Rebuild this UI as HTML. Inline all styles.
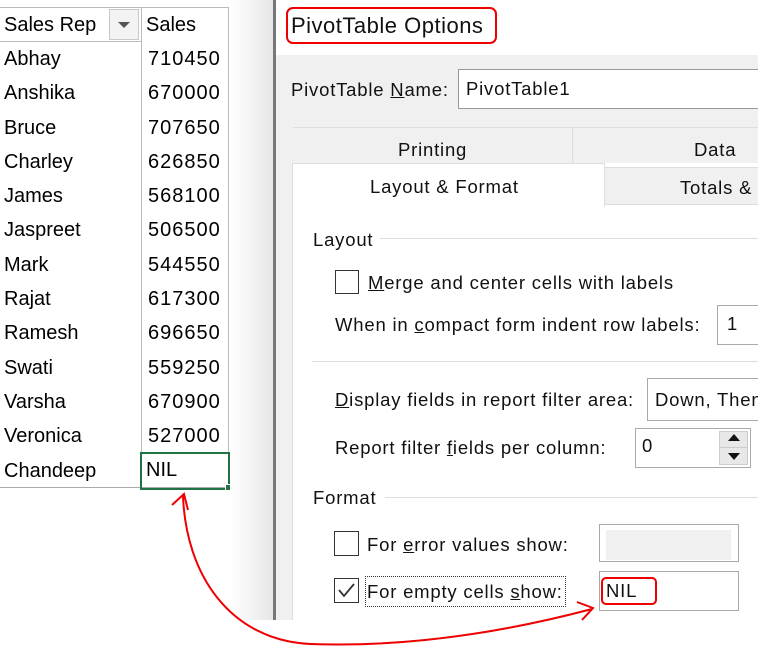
<!DOCTYPE html>
<html><head><meta charset="utf-8"><style>
*{margin:0;padding:0;box-sizing:border-box}
body{width:758px;height:646px;overflow:hidden;background:#fff;position:relative;font-family:"Liberation Sans",sans-serif;color:#000}
.a{position:absolute;white-space:nowrap}
.c{font-size:20px;line-height:34px}
.d{font-size:18.5px;line-height:20px;color:#111;letter-spacing:0.8px}
u{text-decoration:underline}
</style></head><body>
<!-- spreadsheet -->
<div class="a" style="left:0;top:7px;width:229px;height:481px;border-top:1px solid #bbb;border-bottom:1px solid #aaa"></div>
<div class="a" style="left:0;top:41px;width:141px;height:1px;background:#bbb"></div>
<div class="a" style="left:141px;top:7px;width:1px;height:481px;background:#bbb"></div>
<div class="a" style="left:228px;top:7px;width:1px;height:447px;background:#bbb"></div>
<div class="a" style="left:109px;top:9px;width:30px;height:31px;border:1px solid #c8c8c8;background:#f3f3f3"></div>
<div class="a" style="left:118px;top:22px;width:0;height:0;border-left:6px solid transparent;border-right:6px solid transparent;border-top:6px solid #555"></div>
<div class="a c" style="left:4px;top:8px">Sales Rep</div>
<div class="a c" style="left:146px;top:8px">Sales</div>
<div class="a c" style="left:4px;top:42px;line-height:34.3px">Abhay<br>Anshika<br>Bruce<br>Charley<br>James<br>Jaspreet<br>Mark<br>Rajat<br>Ramesh<br>Swati<br>Varsha<br>Veronica<br>Chandeep</div>
<div class="a c" style="left:148px;top:42px;line-height:34.3px;letter-spacing:1px">710450<br>670000<br>707650<br>626850<br>568100<br>506500<br>544550<br>617300<br>696650<br>559250<br>670900<br>527000</div>
<div class="a" style="left:140px;top:452px;width:90px;height:38px;border:2px solid #217346"></div>
<div class="a" style="left:225px;top:484px;width:7px;height:7px;background:#217346;border:1px solid #fff"></div>
<div class="a c" style="left:146px;top:453px">NIL</div>
<!-- dialog -->
<div class="a" style="left:230px;top:0;width:44px;height:620px;background:linear-gradient(to right,#fff,#e6e6e6)"></div>
<div class="a" style="left:273px;top:0;width:3px;height:620px;background:#777"></div>
<div class="a" style="left:276px;top:0;width:482px;height:55px;background:#fff"></div>
<div class="a" style="left:276px;top:55px;width:482px;height:565px;background:#f0f0f0"></div>
<div class="a" style="left:286px;top:7px;width:211px;height:37px;border:2px solid #e00;border-radius:7px"></div>
<div class="a" style="left:291px;top:13px;font-size:22px;line-height:26px;color:#111;letter-spacing:0.5px">PivotTable Options</div>
<div class="a d" style="left:291px;top:80px">PivotTable <u>N</u>ame:</div>
<div class="a" style="left:458px;top:69px;width:310px;height:40px;background:#fff;border:1px solid #999"></div>
<div class="a d" style="left:466px;top:79px">PivotTable1</div>
<div class="a" style="left:293px;top:127px;width:465px;height:1px;background:#ddd"></div>
<div class="a" style="left:572px;top:128px;width:1px;height:36px;background:#ddd"></div>
<div class="a d" style="left:398px;top:140px">Printing</div>
<div class="a d" style="left:694px;top:140px">Data</div>
<div class="a" style="left:292px;top:163px;width:470px;height:457px;background:#fff;border-left:1px solid #ddd"></div>
<div class="a" style="left:604px;top:167px;width:160px;height:38px;background:#f0f0f0;border:1px solid #ddd"></div>
<div class="a d" style="left:680px;top:178px">Totals &amp;</div>
<div class="a" style="left:292px;top:163px;width:313px;height:44px;background:#fff;border:1px solid #ddd;border-bottom:none"></div>
<div class="a d" style="left:370px;top:177px">Layout &amp; Format</div>
<div class="a d" style="left:313px;top:230px">Layout</div>
<div class="a" style="left:380px;top:238px;width:378px;height:1px;background:#ddd"></div>
<div class="a" style="left:335px;top:270px;width:24px;height:24px;border:1px solid #333;background:#fff"></div>
<div class="a d" style="left:368px;top:273px"><u>M</u>erge and center cells with labels</div>
<div class="a d" style="left:335px;top:315px">When in <u>c</u>ompact form indent row labels:</div>
<div class="a" style="left:717px;top:305px;width:50px;height:40px;border:1px solid #aaa;background:#fff"></div>
<div class="a d" style="left:727px;top:314px">1</div>
<div class="a" style="left:312px;top:361px;width:446px;height:1px;background:#ddd"></div>
<div class="a d" style="left:335px;top:390px"><u>D</u>isplay fields in report filter area:</div>
<div class="a" style="left:647px;top:378px;width:120px;height:43px;border:1px solid #aaa;background:#fff;overflow:hidden"></div>
<div class="a d" style="left:655px;top:390px;width:103px;overflow:hidden">Down, Then</div>
<div class="a d" style="left:335px;top:438px">Report filter <u>f</u>ields per column:</div>
<div class="a" style="left:635px;top:428px;width:116px;height:40px;border:1px solid #aaa;background:#fff"></div>
<div class="a d" style="left:642px;top:436px">0</div>
<div class="a" style="left:719px;top:431px;width:29px;height:34px;background:#e8e8e8;border:1px solid #ccc"></div>
<div class="a" style="left:720px;top:447px;width:27px;height:1px;background:#ccc"></div>
<div class="a" style="left:728px;top:434px;border-left:6px solid transparent;border-right:6px solid transparent;border-bottom:7px solid #111"></div>
<div class="a" style="left:728px;top:453px;border-left:6px solid transparent;border-right:6px solid transparent;border-top:7px solid #111"></div>
<div class="a d" style="left:313px;top:488px">Format</div>
<div class="a" style="left:385px;top:497px;width:373px;height:1px;background:#ddd"></div>
<div class="a" style="left:334px;top:531px;width:25px;height:25px;border:1px solid #333;background:#fff"></div>
<div class="a d" style="left:367px;top:535px">For <u>e</u>rror values show:</div>
<div class="a" style="left:599px;top:524px;width:140px;height:38px;border:1px solid #aaa;background:#fff"></div>
<div class="a" style="left:606px;top:530px;width:125px;height:30px;background:#f0f0f0"></div>
<div class="a" style="left:334px;top:578px;width:25px;height:25px;border:1px solid #333;background:#fff"></div>
<svg class="a" style="left:334px;top:578px" width="25" height="25"><path d="M5 12 L10 18 L20 6" fill="none" stroke="#333" stroke-width="1.8"/></svg>
<div class="a" style="left:365px;top:576px;width:201px;height:31px;border:1px dotted #333"></div>
<div class="a d" style="left:367px;top:582px">For empty cells <u>s</u>how:</div>
<div class="a" style="left:599px;top:571px;width:140px;height:40px;border:1px solid #aaa;background:#fff"></div>
<div class="a" style="left:601px;top:577px;width:56px;height:28px;border:2px solid #e00;border-radius:5px"></div>
<div class="a d" style="left:606px;top:581px">NIL</div>
<div class="a" style="left:0;top:620px;width:758px;height:26px;background:#fff"></div>
<svg class="a" style="left:0;top:0" width="758" height="646">
<path d="M183 496 C186 575 230 640 310 644 C420 648 520 628 592 609" fill="none" stroke="#e00" stroke-width="2"/>
<path d="M172 505 L184 494 L188 510" fill="none" stroke="#e00" stroke-width="2"/>
<path d="M577 602 L593 608 L582 620" fill="none" stroke="#e00" stroke-width="2"/>
</svg>
</body></html>
